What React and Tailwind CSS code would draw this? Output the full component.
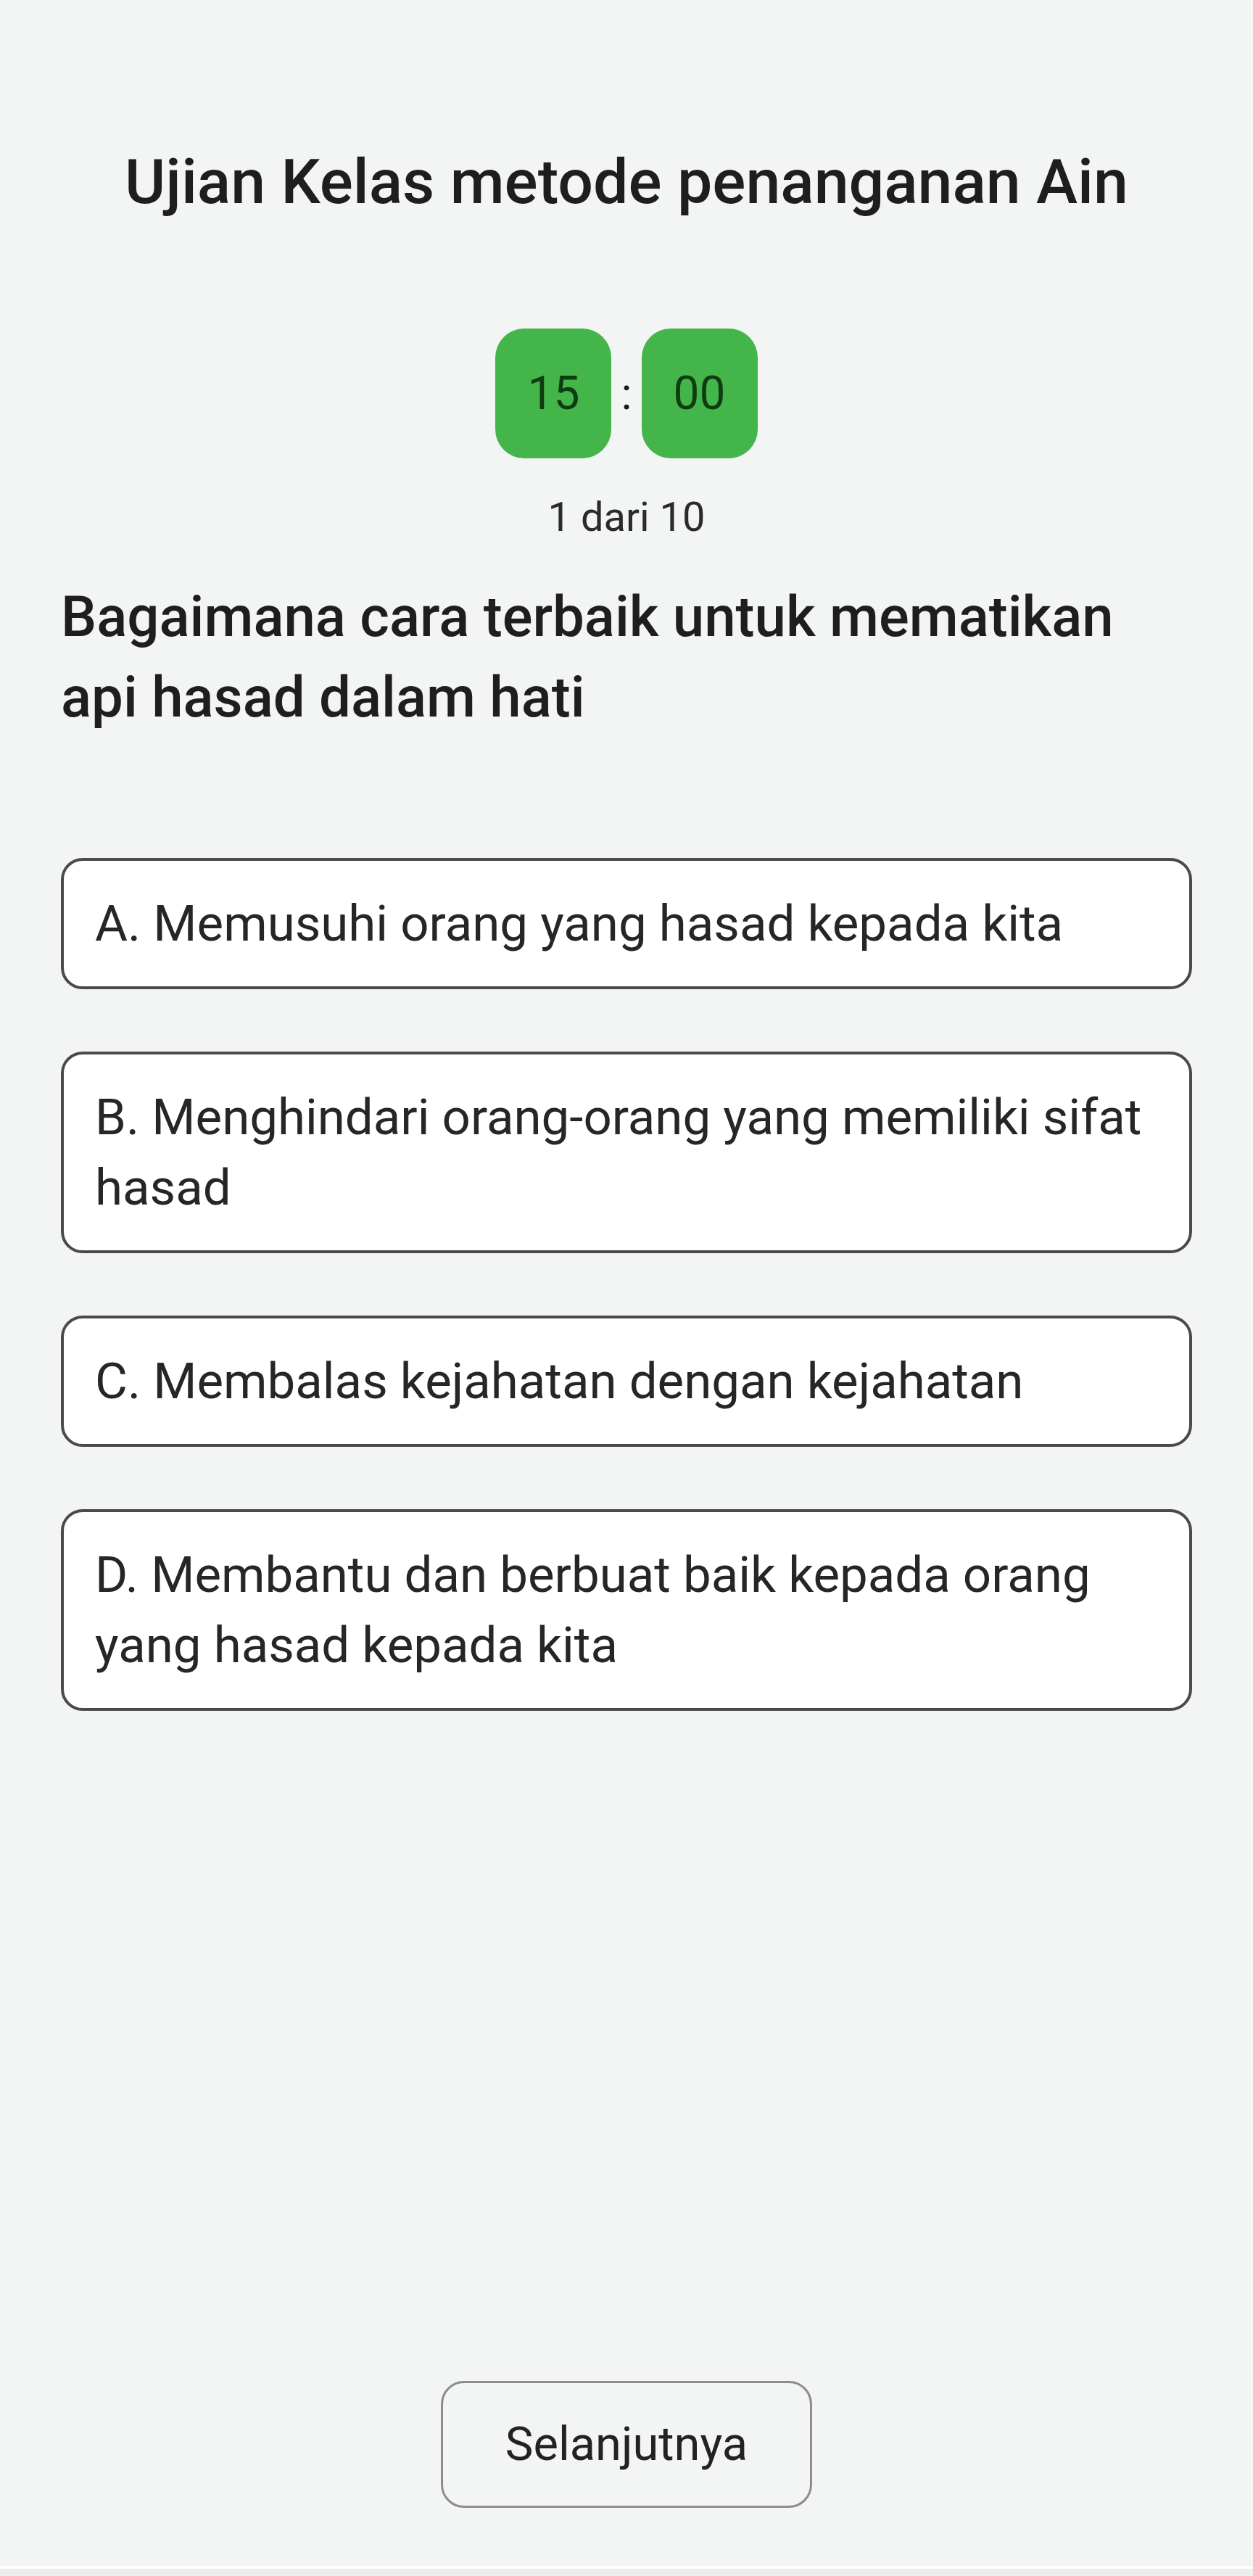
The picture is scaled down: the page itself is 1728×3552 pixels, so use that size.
import React from "react";

const options = [
  "A. Memusuhi orang yang hasad kepada kita",
  "B. Menghindari orang-orang yang memiliki sifat hasad",
  "C. Membalas kejahatan dengan kejahatan",
  "D. Membantu dan berbuat baik kepada orang yang hasad kepada kita",
];

export default function App() {
  return (
    <div
      className="min-h-screen flex flex-col bg-[#f2f5f4] text-[#1e1e1e]"
      style={{ fontFamily: "Roboto, 'Liberation Sans', sans-serif" }}
    >
      <div className="px-[84px] flex flex-col">
        <h1 className="mt-[199px] text-center text-[86px] leading-[103px] font-medium">
          Ujian Kelas metode penanganan Ain
        </h1>

        <div className="mt-[151px] flex items-center justify-center gap-[13px]">
          <div className="w-[160px] h-[179px] rounded-[40px] bg-[#43b54a] flex items-center justify-center text-[64px] text-[#0e3d12]">
            15
          </div>
          <span className="text-[62px] text-[#1a1a1a]">:</span>
          <div className="w-[160px] h-[179px] rounded-[40px] bg-[#43b54a] flex items-center justify-center text-[64px] text-[#0e3d12]">
            00
          </div>
        </div>

        <p className="mt-[48px] text-center text-[56px] leading-[67px] text-[#2a2a2a]">
          1 dari 10
        </p>

        <p className="mt-[48px] pr-[40px] text-[78px] leading-[111px] font-medium">
          Bagaimana cara terbaik untuk mematikan api hasad dalam hati
        </p>

        <div className="mt-[166px] flex flex-col gap-[86px]">
          {options.map((opt) => (
            <div
              key={opt}
              className="bg-white border-[4px] border-[#4a4a4a] rounded-[30px] px-[43px] py-[38px] text-[69px] leading-[97px] text-[#262626]"
            >
              {opt}
            </div>
          ))}
        </div>
      </div>

      <div className="mt-auto pb-[80px] flex justify-center">
        <button className="w-[512px] h-[175px] rounded-[32px] border-[3px] border-[#8c8c8c] bg-[#f3f5f5] text-[65px] text-[#222]">
          Selanjutnya
        </button>
      </div>
      <div className="h-[14px] border-t-[4px] border-white bg-[#ebeeed]" />
    </div>
  );
}
